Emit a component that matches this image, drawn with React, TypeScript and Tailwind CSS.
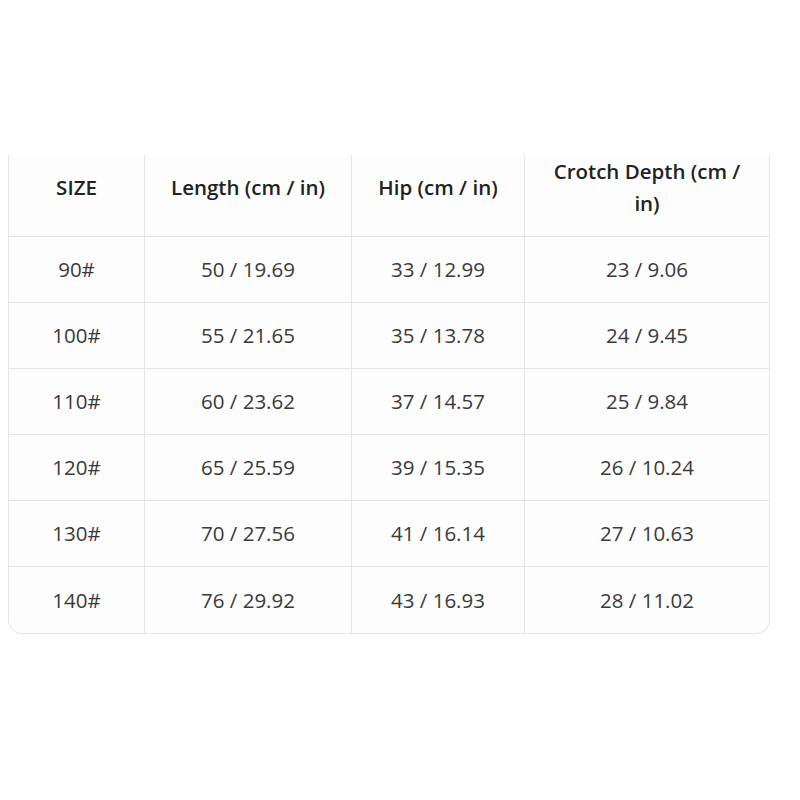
import React from "react";

const rows = [
  ["90#", "50 / 19.69", "33 / 12.99", "23 / 9.06"],
  ["100#", "55 / 21.65", "35 / 13.78", "24 / 9.45"],
  ["110#", "60 / 23.62", "37 / 14.57", "25 / 9.84"],
  ["120#", "65 / 25.59", "39 / 15.35", "26 / 10.24"],
  ["130#", "70 / 27.56", "41 / 16.14", "27 / 10.63"],
  ["140#", "76 / 29.92", "43 / 16.93", "28 / 11.02"],
];

const cols = "grid grid-cols-[136px_207px_173px_244px]";

export default function App() {
  return (
    <div className="w-[800px] h-[800px] bg-white pt-[155px] pl-[8px]" style={{ fontFamily: '"Open Sans", "Noto Sans", sans-serif' }}>
      <div className="w-[762px] border-x border-b border-[#e6e6e6] rounded-b-[14px] bg-[#fdfdfd] overflow-hidden">
        <div className={`${cols} h-[82px] border-b border-[#e6e6e6] text-[#222] font-semibold text-[20.5px] leading-[32px]`}>
          <div className="flex items-center justify-center text-center border-r border-[#e6e6e6] px-3 pb-[18px]">SIZE</div>
          <div className="flex items-center justify-center text-center border-r border-[#e6e6e6] px-3 pb-[18px]">Length (cm / in)</div>
          <div className="flex items-center justify-center text-center border-r border-[#e6e6e6] px-3 pb-[18px]">Hip (cm / in)</div>
          <div className="flex items-center justify-center text-center px-5 pb-[18px]">Crotch Depth (cm / in)</div>
        </div>
        {rows.map((r, i) => (
          <div key={i} className={`${cols} h-[66px] text-[#3a3a3a] text-[20.5px] ${i < rows.length - 1 ? "border-b border-[#e6e6e6]" : ""}`}>
            {r.map((c, j) => (
              <div key={j} className={`flex items-center justify-center ${j < 3 ? "border-r border-[#e6e6e6]" : ""}`}>{c}</div>
            ))}
          </div>
        ))}
      </div>
    </div>
  );
}
